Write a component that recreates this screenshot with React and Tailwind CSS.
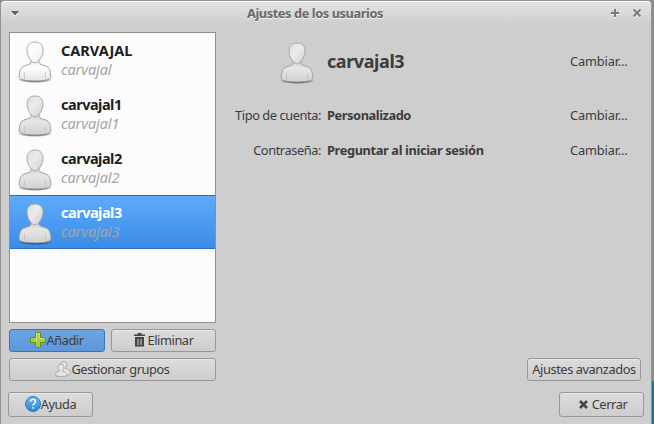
import React from "react";

function Avatar({ id, light }) {
  return (
    <svg width="34" height="44" viewBox="0 0 34 44" className="block shrink-0">
      <defs>
        <linearGradient id={id + "h"} x1="0" y1="0" x2="1" y2="1">
          <stop offset="0" stopColor={light ? "#ffffff" : "#dedede"} />
          <stop offset="0.45" stopColor={light ? "#fcfcfc" : "#ebebeb"} />
          <stop offset="1" stopColor={light ? "#f0f0f0" : "#cdcdcd"} />
        </linearGradient>
        <linearGradient id={id + "b"} x1="0" y1="0" x2="0" y2="1">
          <stop offset="0" stopColor={light ? "#eeeeee" : "#cfcfcf"} />
          <stop offset="0.4" stopColor={light ? "#fcfcfc" : "#e6e6e6"} />
          <stop offset="1" stopColor={light ? "#e4e4e4" : "#d0d0d0"} />
        </linearGradient>
        <radialGradient id={id + "s"}>
          <stop offset="0.6" stopColor="#000" stopOpacity="0.5" />
          <stop offset="1" stopColor="#000" stopOpacity="0" />
        </radialGradient>
      </defs>
      <ellipse cx="17" cy="38.8" rx="17" ry="3.2" fill={`url(#${id}s)`} />
      <path
        d="M13 18v3.800c-.8 1.600-3.800 2.100-7 3.200C2.800 26.200 1.500 29.500 1.100 35.700c0 1.400.6 2 2 2.500 5.500 2.300 22.300 2.300 27.800 0 1.400-.5 2-1.100 2-2.500-.4-6.200-1.700-9.500-4.900-10.700-3.200-1.100-6.200-1.600-7-3.200V18z"
        fill={`url(#${id}b)`}
        stroke="#9a9a9a"
        strokeWidth="0.9"
      />
      <path d="M6.500 31v6.500M27.500 31v6.500" stroke="#bdbdbd" strokeWidth="0.7" />
      <path
        d="M17 1c5.200 0 8 3.200 8 7.900 0 3.300-1.100 6.500-2.800 9-1.600 2.400-3.500 4-5.200 4s-3.600-1.600-5.200-4C10.100 15.400 9 12.200 9 8.900 9 4.200 11.800 1 17 1z"
        fill={`url(#${id}h)`}
        stroke="#a2a2a2"
        strokeWidth="0.9"
      />
    </svg>
  );
}

function UserRow({ name, login, selected, light }) {
  return (
    <div
      className={
        selected
          ? "flex h-[54px] border-y border-[#2a6fc0] bg-linear-to-b from-[#5faafc] to-[#3a8ce6] pl-[8px] pt-[7px]"
          : "flex h-[54px] pl-[8px] pt-[8px]"
      }
    >
      <Avatar id={name} light={light} />
      <div className={"ml-[9px] text-[14.500px] leading-[19px] " + (selected ? "text-white" : "text-[#1e1e1e]")}>
        <div className={light ? "font-bold tracking-normal" : "font-bold tracking-[-0.5px]"}>{name}</div>
        <div className="italic tracking-[-0.1px] text-[#a5a5a5]">{login}</div>
      </div>
    </div>
  );
}

function Button({ className, children }) {
  return (
    <button
      className={
        "flex items-center justify-center whitespace-nowrap rounded-[3px] border border-[#989898] bg-linear-to-b from-[#dcdcdc] to-[#cdcdcd] shadow-[inset_0_1px_0_#e8e8e8] " +
        className
      }
    >
      {children}
    </button>
  );
}

export default function App() {
  return (
    <div className="flex h-[424px] w-[654px] overflow-hidden bg-linear-to-b from-[#8e8e8e] from-[381px] to-[#14778b] to-[381px] font-['Noto_Sans',sans-serif] text-[12.800px] tracking-[-0.42px] text-[#3c3c3c]">
      <div className="flex h-[424px] w-[652px] flex-col rounded-t-[5px] border-x border-t border-[#929292] bg-[#cecece]">
        <header className="flex h-[23px] shrink-0 items-center rounded-t-[4px] border-t border-white bg-linear-to-b from-[#e4e4e4] to-[#cecece] px-[9px]">
          <svg width="10" height="8" viewBox="0 0 10 8">
            <path d="M1 3.500h8L5 7.500z" fill="#fff" />
            <path d="M.8 2h8.400L5 6.500z" fill="#626262" />
          </svg>
          <h1 className="flex-1 pt-[1px] text-center font-bold text-[#696969] [text-shadow:0_1px_0_#f2f2f2]">
            Ajustes de los usuarios
          </h1>
          <svg width="32" height="12" viewBox="0 0 32 12">
            <path d="M1 7h8M5 3v8" stroke="#f4f4f4" strokeWidth="2" />
            <path d="M1 6h8M5 2v8" stroke="#7a7a7a" strokeWidth="2" />
            <path d="M23.500 3.500l7 7m0-7l-7 7" stroke="#f4f4f4" strokeWidth="2" />
            <path d="M23.500 2.500l7 7m0-7l-7 7" stroke="#7a7a7a" strokeWidth="2" />
          </svg>
        </header>
        <main className="flex h-[358px] pl-[8px] pt-[8px]">
          <section className="w-[207px]">
            <div className="h-[291px] border border-[#8f8f8f] bg-[#fcfcfc]">
              <UserRow name="CARVAJAL" login="carvajal" light />
              <UserRow name="carvajal1" login="carvajal1" />
              <UserRow name="carvajal2" login="carvajal2" />
              <UserRow name="carvajal3" login="carvajal3" selected />
            </div>
            <div className="mt-[6px] flex gap-[6px]">
              <button className="flex h-[23px] w-[96px] items-center justify-center rounded-[3px] border border-[#3175c5] bg-linear-to-b from-[#6ca4e3] to-[#5e98db]">
                <svg width="16" height="16" viewBox="0 0 16 16" className="-mt-px">
                  <path d="M5.500.5h5v5h5v5h-5v5h-5v-5h-5v-5h5z" fill="#a9cc3c" stroke="#688f1c" />
                  <path d="M6.500 10V1.500h3v5h5" fill="none" stroke="#d2e77c" />
                </svg>
                Añadir
              </button>
              <Button className="h-[23px] w-[105px] gap-[3px]">
                <svg width="11" height="14" viewBox="0 0 11 14" className="-mt-px">
                  <path d="M0 3V1.500h3.500V0h4v1.500H11V3z" fill="#444" />
                  <path d="M1 4h9v9.500H1z" fill="#444" />
                  <path d="M4 6v6M7 6v6" stroke="#d5d5d5" />
                </svg>
                Eliminar
              </Button>
            </div>
            <Button className="mt-[6px] h-[23px] w-[207px]">
              <svg
                width="16"
                height="16"
                viewBox="0 0 16 16"
                fill="#e6e6e6"
                stroke="#a2a2a2"
                strokeWidth="0.9"
                className="-mt-px"
              >
                <path d="M8.800.5c2 0 3 1.400 3 3.200 0 1.300-.6 2.500-1.300 3.200v.6c3 .6 4.600 1.600 4.900 5 .1 1.100-1 1.500-2 1.500H5.500c-1-5 .2-5.900 1.800-6.500v-.6C6.400 6.200 5.800 5 5.800 3.700c0-1.800 1-3.200 3-3.200z" />
                <path d="M6 3c2 0 3 1.400 3 3.200 0 1.400-.7 2.700-1.500 3.400v.7c2.900.5 4.400 1.400 4.600 3.900 0 1.700-11.600 1.700-11.600 0 .2-2.500 1.300-3.400 4-3.900v-.7C3.700 8.900 3 7.600 3 6.200 3 4.400 4 3 6 3z" />
              </svg>
              Gestionar grupos
            </Button>
          </section>
          <section className="flex flex-1 flex-col pl-[12px] pr-[9px]">
            <div className="flex h-[62px] items-center">
              <div className="flex w-[93px] justify-end pr-[7px] pt-[2px]">
                <Avatar id="current" />
              </div>
              <h2 className="ml-[6px] flex-1 pb-[4px] text-[18px] font-bold leading-[24px]">carvajal3</h2>
              <span className="mr-[14px] w-[58px] pb-[2px] tracking-[-0.150px]">Cambiar...</span>
            </div>
            <div className="mt-[13px] flex h-[17px] items-center whitespace-nowrap">
              <span className="w-[93px] text-right">Tipo de cuenta:</span>
              <b className="ml-[6px] flex-1">Personalizado</b>
              <span className="mr-[14px] w-[58px] tracking-[-0.150px]">Cambiar...</span>
            </div>
            <div className="mt-[18px] flex h-[17px] items-center whitespace-nowrap">
              <span className="w-[93px] text-right">Contraseña:</span>
              <b className="ml-[6px] flex-1 tracking-[-0.37px]">Preguntar al iniciar sesión</b>
              <span className="mr-[14px] w-[58px] tracking-[-0.150px]">Cambiar...</span>
            </div>
            <Button className="mt-auto mr-px mb-[1px] h-[23px] w-[114px] self-end">Ajustes avanzados</Button>
          </section>
        </main>
        <footer className="flex justify-between pl-[7px] pr-[7px] pt-[10px]">
          <Button className="h-[25px] w-[85px]">
            <svg width="16" height="16" viewBox="0 0 16 16" className="-mt-px">
              <defs>
                <linearGradient id="help" x1="0" y1="0" x2="0" y2="1">
                  <stop offset="0" stopColor="#71b8f2" />
                  <stop offset="1" stopColor="#2a82d4" />
                </linearGradient>
              </defs>
              <circle cx="8" cy="8" r="7.500" fill="url(#help)" stroke="#3179b8" />
              <path d="M5.500 5.700c0-3.200 5-2.900 5 0 0 1.700-2.500 1.900-2.500 4M8 11v1.700" fill="none" stroke="#fff" strokeWidth="1.400" />
            </svg>
            Ayuda
          </Button>
          <Button className="h-[25px] w-[85px] gap-[4px] pl-[3px]">
            <svg width="9" height="9" viewBox="0 0 9 9">
              <path d="M1 1l7 7m0-7L1 8" stroke="#444" strokeWidth="2.600" />
            </svg>
            Cerrar
          </Button>
        </footer>
      </div>
    </div>
  );
}
